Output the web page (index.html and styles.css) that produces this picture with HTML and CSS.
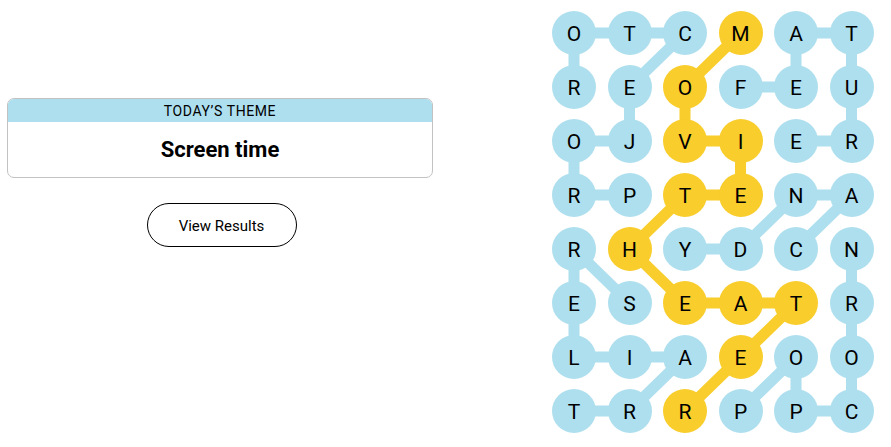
FILE: index.html
```html
<!DOCTYPE html>
<html lang="en">
<head>
<meta charset="utf-8">
<title>Strands</title>
<link rel="stylesheet" href="styles.css">
</head>
<body>
<main class="page">
  <section class="left">
    <div class="theme-card">
      <div class="theme-header">TODAY’S THEME</div>
      <div class="theme-body">Screen time</div>
    </div>
    <button class="results-btn">View Results</button>
  </section>
  <section class="right">
    <div class="board">
      <svg class="links" width="322" height="422" viewBox="0 0 322 422" aria-hidden="true">
        <g fill="none" stroke="#aedfee" stroke-width="11" stroke-linejoin="round" stroke-linecap="round">
          <polyline points="77.5,184 22,184 22,130 77.5,130 77.5,76 133,22 77.5,22 22,22 22,76"/>
          <polyline points="188.5,76 244,76 244,22 299.5,22 299.5,76 299.5,130 244,130"/>
          <polyline points="244,238 299.5,184 244,184 188.5,238 133,238"/>
          <polyline points="188.5,400 244,346 244,400 299.5,400 299.5,346 299.5,292 299.5,238"/>
          <polyline points="22,400 77.5,400 133,346 77.5,346 22,346 22,292 22,238 77.5,292"/>
        </g>
        <g fill="none" stroke="#f8cd2c" stroke-width="11" stroke-linejoin="round" stroke-linecap="round">
          <polyline points="188.5,22 133,76 133,130 188.5,130 188.5,184 133,184 77.5,238 133,292 188.5,292 244,292 188.5,346 133,400"/>
        </g>
      </svg>
      <div class="grid">
        <div class="cell">O</div><div class="cell">T</div><div class="cell">C</div><div class="cell gold">M</div><div class="cell">A</div><div class="cell">T</div>
        <div class="cell">R</div><div class="cell">E</div><div class="cell gold">O</div><div class="cell">F</div><div class="cell">E</div><div class="cell">U</div>
        <div class="cell">O</div><div class="cell">J</div><div class="cell gold">V</div><div class="cell gold">I</div><div class="cell">E</div><div class="cell">R</div>
        <div class="cell">R</div><div class="cell">P</div><div class="cell gold">T</div><div class="cell gold">E</div><div class="cell">N</div><div class="cell">A</div>
        <div class="cell">R</div><div class="cell gold">H</div><div class="cell">Y</div><div class="cell">D</div><div class="cell">C</div><div class="cell">N</div>
        <div class="cell">E</div><div class="cell">S</div><div class="cell gold">E</div><div class="cell gold">A</div><div class="cell gold">T</div><div class="cell">R</div>
        <div class="cell">L</div><div class="cell">I</div><div class="cell">A</div><div class="cell gold">E</div><div class="cell">O</div><div class="cell">O</div>
        <div class="cell">T</div><div class="cell">R</div><div class="cell gold">R</div><div class="cell">P</div><div class="cell">P</div><div class="cell">C</div>
      </div>
    </div>
  </section>
</main>
</body>
</html>
```

FILE: styles.css
```css
* { box-sizing: border-box; }
html, body {
  margin: 0;
  padding: 0;
  background: #ffffff;
  color: #000000;
  font-family: Roboto, "Liberation Sans", sans-serif;
}
.page {
  display: flex;
  width: 891px;
  height: 447px;
}
.left {
  width: 441px;
  padding: 98px 8px 0 7px;
  display: flex;
  flex-direction: column;
  align-items: center;
}
.theme-card {
  width: 426px;
  border: 1px solid #c2c2c2;
  border-radius: 7px;
  overflow: hidden;
}
.theme-header {
  background: #aedfee;
  height: 23px;
  line-height: 24px;
  text-align: center;
  font-size: 14px;
  font-weight: 400;
  letter-spacing: 0.6px;
}
.theme-body {
  height: 55px;
  display: flex;
  align-items: center;
  justify-content: center;
  font-size: 22px;
  font-weight: 700;
}
.results-btn {
  margin-top: 25px;
  margin-left: 3px;
  width: 150px;
  height: 44px;
  border: 1px solid #000000;
  border-radius: 22px;
  background: #ffffff;
  font-family: Roboto, "Liberation Sans", sans-serif;
  font-size: 15px;
  color: #000000;
  padding: 2px 0 0;
}
.right {
  flex: 1;
  padding: 11px 0 0 111px;
}
.board {
  position: relative;
  width: 322px;
  height: 422px;
}
.links {
  position: absolute;
  left: 0;
  top: 0;
}
.grid {
  position: relative;
  display: grid;
  grid-template-columns: repeat(6, 44px);
  grid-auto-rows: 44px;
  column-gap: 11.5px;
  row-gap: 10px;
}
.cell {
  width: 44px;
  height: 44px;
  border-radius: 50%;
  background: #aedfee;
  display: flex;
  align-items: center;
  justify-content: center;
  font-size: 21px;
  font-weight: 400;
  padding-top: 2px;
}
.cell.gold {
  background: #f8cd2c;
}
```
